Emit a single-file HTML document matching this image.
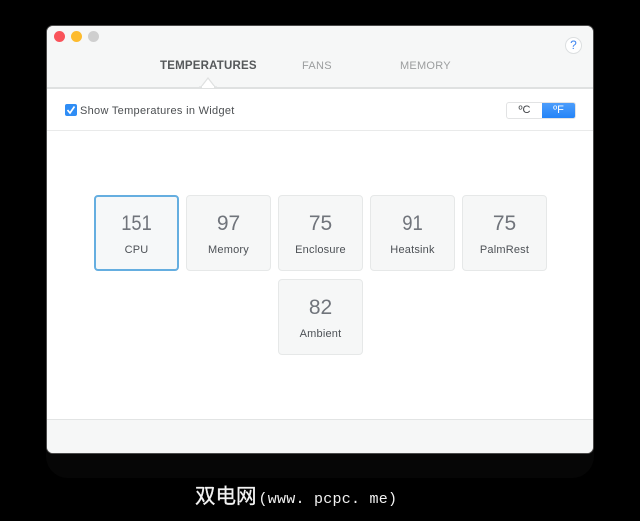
<!DOCTYPE html>
<html>
<head>
<meta charset="utf-8">
<style>
html,body{margin:0;padding:0;background:#000;width:640px;height:521px;overflow:hidden}
body{position:relative;font-family:"Liberation Sans",sans-serif}
.abs{position:absolute}
#shadow{left:46px;top:440px;width:548px;height:38px;background:#060606;border-radius:0 0 22px 22px}
#win{left:46px;top:25px;width:546px;height:427px;background:#fff;border:1px solid #4a4a4a;border-radius:7px;overflow:hidden}
#head{left:0;top:0;width:546px;height:61px;background:#f6f7f7;border-bottom:2px solid #dfe1e1}
#foot{left:0;top:393px;width:546px;height:34px;background:#f6f7f7;border-top:1px solid #e2e4e4}
#rule{left:0;top:104px;width:546px;height:1px;background:#e9eaea}
.dot{width:11px;height:11px;border-radius:50%;top:5px}
.tab{top:33px;font-size:11.5px;line-height:14px;white-space:nowrap;color:#9b9d9e;letter-spacing:.1px}
.card{box-sizing:border-box;width:85px;height:76px;background:#f6f7f7;border:1px solid #e6e8e8;border-radius:4px;text-align:center}
.card.sel{border:2px solid #65aee0;background:#f6f8f9}
.card b{display:block;position:absolute;left:0;right:0;top:15px;font-weight:normal;font-size:21px;line-height:26px;color:#70747b}
.card span{display:block;position:absolute;left:0;right:0;top:47px;font-size:11px;line-height:14px;letter-spacing:.2px;color:#4d5156}
.card.sel b{top:14px}.card.sel span{top:46px}
</style>
</head>
<body>
<div id="shadow" class="abs"></div>
<div id="win" class="abs">
  <div id="head" class="abs"></div>
  <div id="rule" class="abs"></div>
  <div id="foot" class="abs"></div>
  <div class="abs dot" style="left:7px;background:#f9535a"></div>
  <div class="abs dot" style="left:24px;background:#fdbb2e"></div>
  <div class="abs dot" style="left:41px;background:#cfcfcf"></div>
  <div class="abs tab" style="left:113px;color:#55585a;font-weight:bold;font-size:11.5px;letter-spacing:.2px">TEMPERATURES</div>
  <div class="abs tab" style="left:255px;font-size:11px;letter-spacing:.3px">FANS</div>
  <div class="abs tab" style="left:353px;font-size:11px;letter-spacing:.25px">MEMORY</div>
  <svg class="abs" style="left:151px;top:50px" width="20" height="12"><path d="M1 11 H3 L10 2 L17 11 H19" fill="#fff" stroke="#dfe1e1" stroke-width="1.2"/><rect x="4" y="10" width="12" height="2" fill="#fff"/></svg>
  <div class="abs" style="left:518px;top:11px;width:15px;height:15px;background:#fff;border:1px solid #dcdfe0;border-radius:50%;text-align:center;font-size:12px;line-height:15px;color:#3f86f0">?</div>

  <div class="abs" style="left:18px;top:78px;width:12px;height:12px;background:#2f8df5;border-radius:2px">
    <svg width="12" height="12" style="display:block"><path d="M2.5 6 L5 9 L9.5 2.5" fill="none" stroke="#fff" stroke-width="1.7"/></svg>
  </div>
  <div class="abs" style="left:33px;top:78px;font-size:11px;line-height:14px;color:#4c4f52;letter-spacing:.3px;white-space:nowrap">Show Temperatures in Widget</div>

  <div class="abs" style="left:459px;top:76px;width:68px;height:15px;background:#fff;border:1px solid #e2e3e4;border-radius:3px;overflow:hidden;font-size:11px;line-height:15px;text-align:center">
    <div class="abs" style="left:0;top:0;width:35px;color:#3e4145">ºC</div>
    <div class="abs" style="left:35px;top:0;width:33px;height:15px;background:linear-gradient(#4c9dfb,#2484f8);color:#fff">ºF</div>
  </div>

  <div class="abs card sel" style="left:47px;top:169px"><b style="transform:scaleX(.87)">151</b><span>CPU</span></div>
  <div class="abs card" style="left:139px;top:169px"><b>97</b><span>Memory</span></div>
  <div class="abs card" style="left:231px;top:169px"><b>75</b><span>Enclosure</span></div>
  <div class="abs card" style="left:323px;top:169px"><b style="transform:scaleX(.88)">91</b><span>Heatsink</span></div>
  <div class="abs card" style="left:415px;top:169px"><b>75</b><span>PalmRest</span></div>
  <div class="abs card" style="left:231px;top:253px"><b>82</b><span>Ambient</span></div>
</div>
<div class="abs" style="left:195px;top:485px;font-family:'Liberation Sans','WenQuanYi Zen Hei','Noto Sans CJK SC',sans-serif;font-size:20.5px;line-height:24px;color:#f2f2f2;white-space:nowrap"><span style="-webkit-text-stroke:.3px #f2f2f2">双电网</span><span style="font-family:'Liberation Mono',monospace;font-size:15px;letter-spacing:.25px;margin-left:2px">(www. pcpc. me)</span></div>
</body>
</html>
